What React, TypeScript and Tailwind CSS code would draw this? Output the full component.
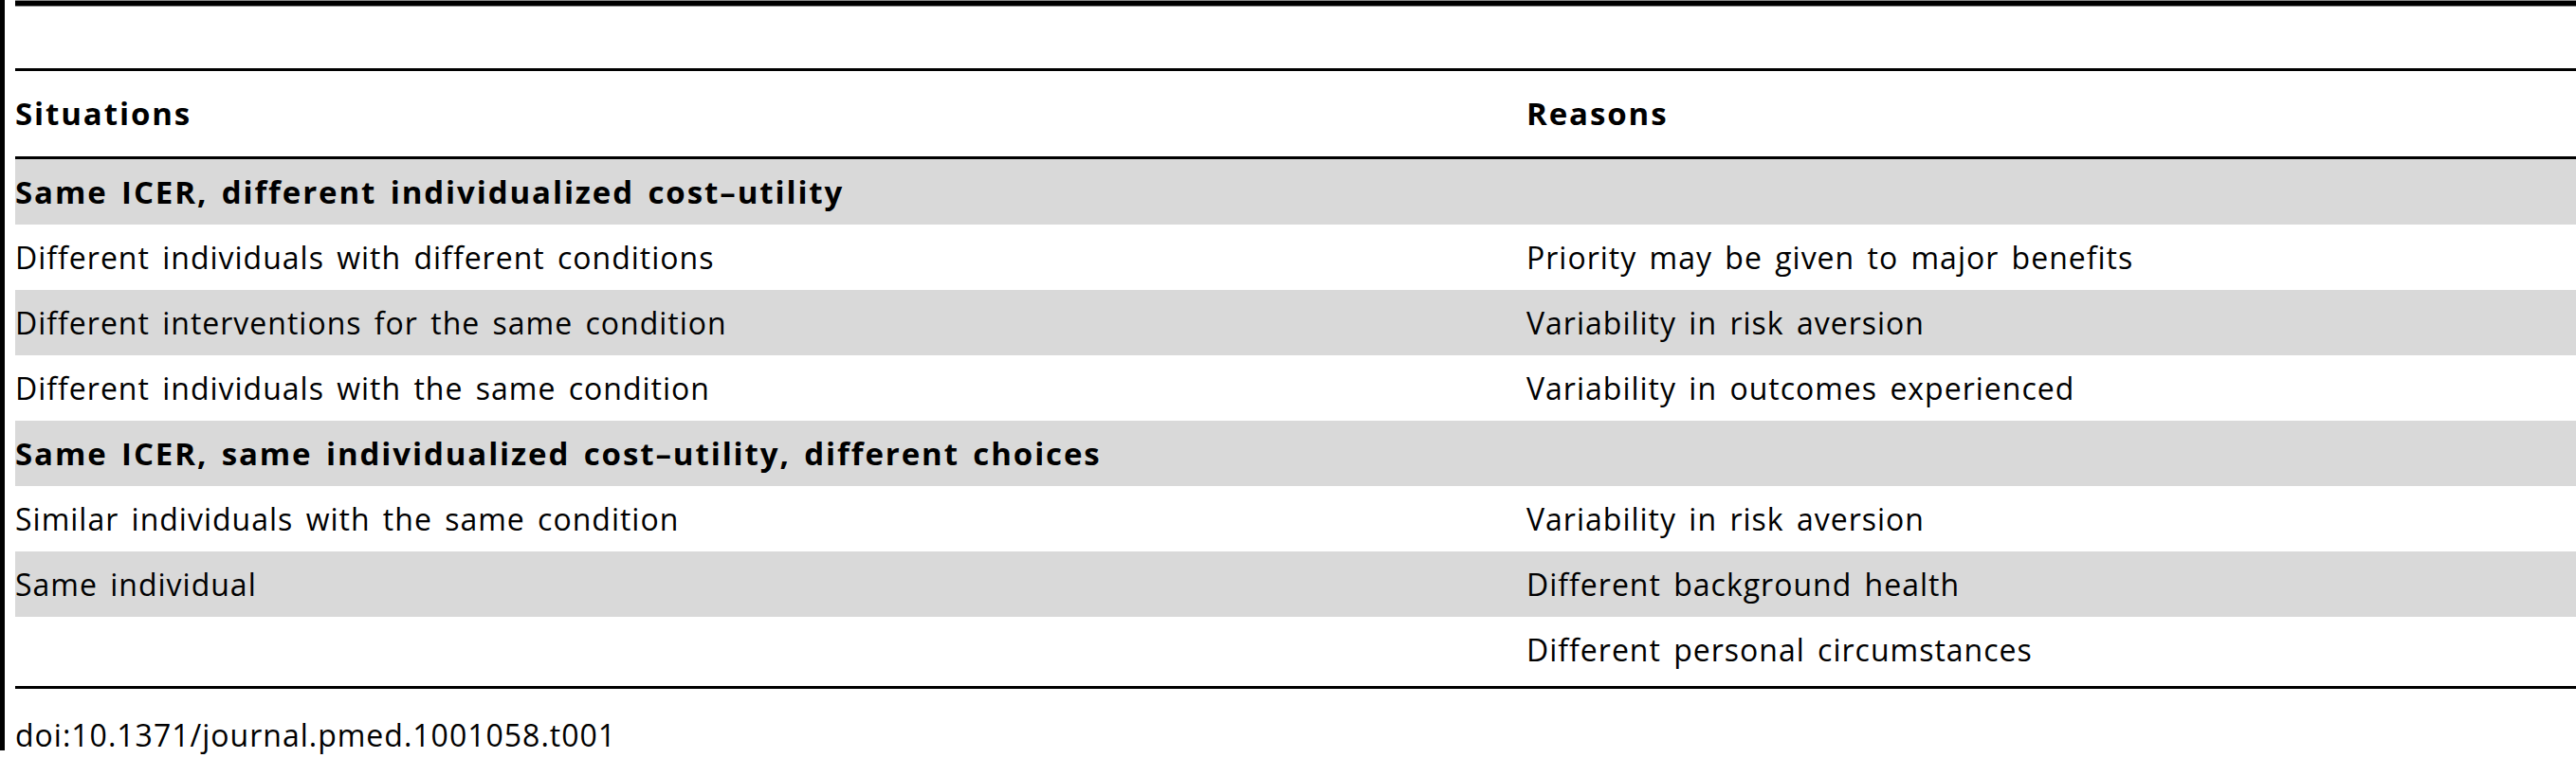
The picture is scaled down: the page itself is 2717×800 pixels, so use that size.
const rows: { kind: 'group' | 'row'; left: string; right?: string }[] = [
  { kind: 'group', left: 'Same ICER, different individualized cost–utility' },
  { kind: 'row', left: 'Different individuals with different conditions', right: 'Priority may be given to major benefits' },
  { kind: 'row', left: 'Different interventions for the same condition', right: 'Variability in risk aversion' },
  { kind: 'row', left: 'Different individuals with the same condition', right: 'Variability in outcomes experienced' },
  { kind: 'group', left: 'Same ICER, same individualized cost–utility, different choices' },
  { kind: 'row', left: 'Similar individuals with the same condition', right: 'Variability in risk aversion' },
  { kind: 'row', left: 'Same individual', right: 'Different background health' },
  { kind: 'row', left: '', right: 'Different personal circumstances' },
];

export default function App() {
  return (
    <div className="w-[2717px] h-[800px] bg-white text-black font-['Open_Sans',sans-serif] text-[32px] tracking-[1px] [word-spacing:4px] overflow-hidden flex">
      <div className="w-[5px] h-[792px] bg-black shrink-0" />
      <div className="flex-1 ml-[11px] flex flex-col">
        <div className="h-[7px] bg-black border-y border-[#8a8a8a]" />
        <div className="h-[65px]" />
        <div className="border-t-[3px] border-black" />
        <div className="grid grid-cols-[1594px_1fr] h-[90px] items-center font-bold text-[33px] tracking-[1.9px]">
          <div>Situations</div>
          <div>Reasons</div>
        </div>
        <div className="border-t-[3px] border-black" />
        {rows.map((r, i) => (
          <div
            key={i}
            className={`grid grid-cols-[1594px_1fr] h-[69px] items-center ${i % 2 === 0 ? 'bg-[#d9d9d9]' : 'bg-white'}`}
          >
            {r.kind === 'group' ? (
              <div className="font-bold text-[33px] tracking-[1.9px] col-span-2">{r.left}</div>
            ) : (
              <>
                <div>{r.left}</div>
                <div>{r.right}</div>
              </>
            )}
          </div>
        ))}
        <div className="h-[4px]" />
        <div className="border-t-[3px] border-black" />
        <div className="pt-[32px] leading-[34px]">doi:10.1371/journal.pmed.1001058.t001</div>
      </div>
    </div>
  );
}
